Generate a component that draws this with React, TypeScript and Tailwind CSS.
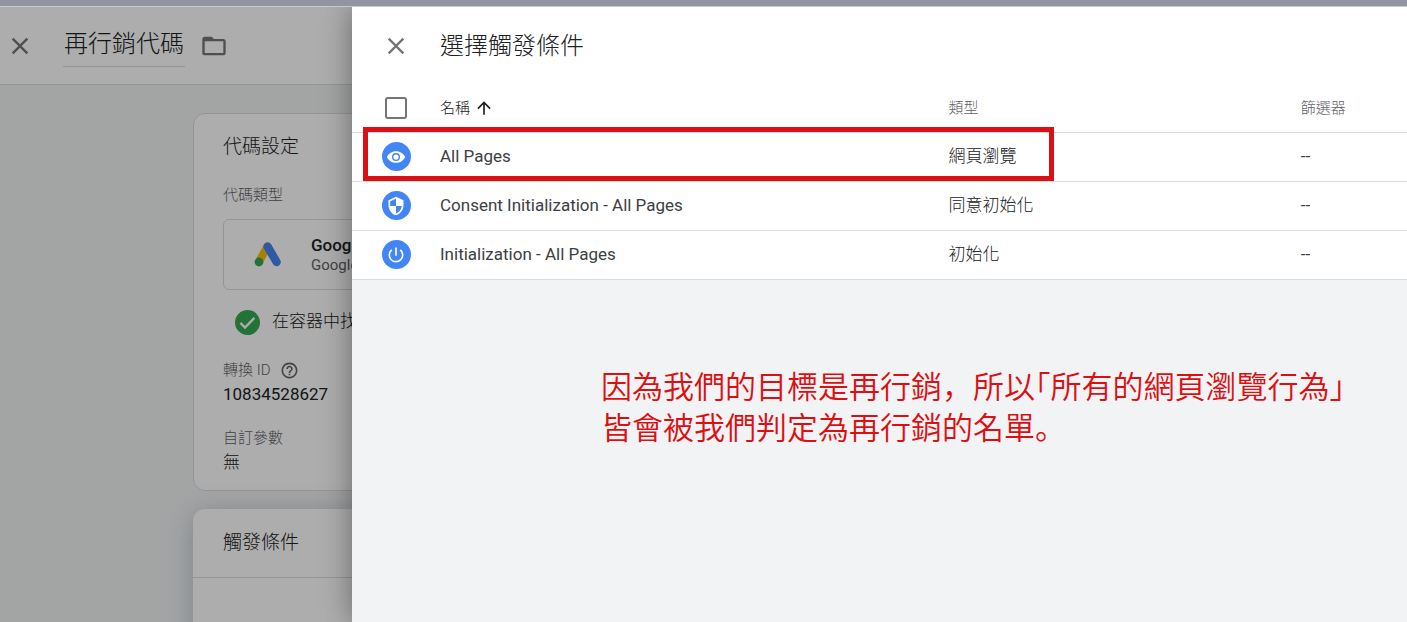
import type { ReactNode } from "react";
import {
  MdArrowUpward,
  MdClose,
  MdFolderOpen,
  MdHelpOutline,
  MdPowerSettingsNew,
  MdSecurity,
} from "react-icons/md";

type Trigger = {
  name: string;
  type: string;
  filter: string;
  icon: ReactNode;
  highlighted?: boolean;
};

function EyeIcon() {
  return (
    <svg width="20" height="20" viewBox="0 0 24 24" aria-hidden="true">
      <path
        d="M12 5C7 5 2.7 7.9 1 12c1.7 4.1 6 7 11 7s9.300-2.900 11-7c-1.700-4.100-6-7-11-7z"
        fill="currentColor"
      />
      <circle cx="12" cy="12" r="4" fill="none" stroke="#4285f4" strokeWidth="1.7" />
    </svg>
  );
}

const triggers: Trigger[] = [
  {
    name: "All Pages",
    type: "網頁瀏覽",
    filter: "--",
    icon: <EyeIcon />,
    highlighted: true,
  },
  {
    name: "Consent Initialization - All Pages",
    type: "同意初始化",
    filter: "--",
    icon: <MdSecurity size={20} />,
  },
  {
    name: "Initialization - All Pages",
    type: "初始化",
    filter: "--",
    icon: <MdPowerSettingsNew size={20} />,
  },
];

function GoogleAdsLogo() {
  return (
    <svg width="28" height="28" viewBox="0 0 28 28" aria-hidden="true">
      <path
        d="M13.6 5.4 5 20.6"
        stroke="#fbbc04"
        strokeWidth="8"
        strokeLinecap="round"
      />
      <path
        d="M13.6 5.6 22.6 21"
        stroke="#4285f4"
        strokeWidth="8.4"
        strokeLinecap="round"
      />
      <circle cx="5" cy="21" r="4.4" fill="#34a853" />
    </svg>
  );
}

function TagPage() {
  return (
    <div className="h-full bg-[#f1f3f4]">
      <header className="flex h-[78px] items-center border-b border-[#dadce0] bg-white pl-1.5">
        <button type="button" aria-label="關閉" className="text-[#757575]">
          <MdClose size={28} />
        </button>
        <h1 className="ml-[29px] border-b border-[#dadce0] px-px pt-0.5 pb-1 text-2xl leading-9 font-light">
          再行銷代碼
        </h1>
        <button type="button" aria-label="資料夾" className="ml-[15px] text-[#757575]">
          <MdFolderOpen size={28} />
        </button>
      </header>

      <main className="ml-[193px] pt-7">
        <section className="rounded-xl border border-[#dadce0] bg-white px-[29px] pt-4 pb-4">
          <h2 className="pt-px text-[19px] leading-8 font-light">代碼設定</h2>
          <p className="mt-5 text-[15px] leading-6 font-light text-[#5f6368]">代碼類型</p>
          <div className="mt-3 flex h-[71px] items-center rounded-md border border-[#dadce0] pl-[30px]">
            <GoogleAdsLogo />
            <div className="ml-[29px] leading-5 whitespace-nowrap">
              <p className="text-[17px] leading-5 font-medium">Google Ads 再行銷</p>
              <p className="text-[15px] leading-5 text-[#5f6368]">Google Ads</p>
            </div>
          </div>
          <div className="mt-5 flex h-6 items-center gap-3 pl-3 text-[17px] font-light whitespace-nowrap">
            <svg width="25" height="25" viewBox="0 0 24 24" aria-hidden="true">
              <circle cx="12" cy="12" r="12" fill="#34a853" />
              <path
                d="M5.2 12.4 9.6 16.8 18.6 7.6"
                fill="none"
                stroke="#fff"
                strokeWidth="2.2"
              />
            </svg>
            在容器中找到 Google 代碼
          </div>
          <p className="mt-6 flex items-center gap-2.5 text-[15px] leading-6 font-light text-[#5f6368]">
            轉換 ID
            <MdHelpOutline size={19} />
          </p>
          <p className="text-[17px] leading-6">10834528627</p>
          <p className="mt-5 text-[15px] leading-6 font-light text-[#5f6368]">自訂參數</p>
          <p className="text-[17px] leading-6 font-light">無</p>
        </section>

        <section className="mt-[18px] h-60 rounded-xl bg-white shadow-[0_4px_28px_rgba(60,80,110,0.3)]">
          <h2 className="flex h-[69px] items-center border-b border-[#dadce0] px-[30px] text-[19px] font-light">
            觸發條件
          </h2>
        </section>
      </main>
    </div>
  );
}

function TriggerTable() {
  return (
    <table className="w-full table-fixed bg-white text-left">
      <colgroup>
        <col className="w-[88px]" />
        <col className="w-[48.2%]" />
        <col className="w-[33.4%]" />
        <col />
      </colgroup>
      <thead>
        <tr className="h-12 border-b border-[#dadce0] text-[15px] text-[#5f6368]">
          <th className="align-middle">
            <input
              type="checkbox"
              aria-label="全選"
              className="mx-auto block size-[22px] appearance-none rounded-[3px] border-2 border-[#757575] bg-white"
            />
          </th>
          <th className="font-light text-[#202124]">
            <button type="button" className="flex items-center gap-1">
              名稱
              <MdArrowUpward size={20} />
            </button>
          </th>
          <th className="font-light">類型</th>
          <th className="font-light">篩選器</th>
        </tr>
      </thead>
      <tbody className="text-[17px]">
        {triggers.map((trigger) => (
          <tr key={trigger.name} className="relative h-[49px] border-b border-[#dadce0]">
            <td>
              <span className="mx-auto flex size-[29px] items-center justify-center rounded-full bg-[#4285f4] text-white">
                {trigger.icon}
              </span>
              {trigger.highlighted && (
                <span className="absolute -top-[5px] left-[11px] h-[54px] w-[65.5%] border-5 border-[#dc0f12]" />
              )}
            </td>
            <td className="text-[#3c4043]">{trigger.name}</td>
            <td className="font-light">{trigger.type}</td>
            <td className="text-[#3c4043]">{trigger.filter}</td>
          </tr>
        ))}
      </tbody>
    </table>
  );
}

function TriggerPanel() {
  return (
    <aside className="absolute inset-y-0 right-0 left-[352px] bg-[#f1f3f4] shadow-[0_0_28px_rgba(0,0,0,0.4)]">
      <header className="flex h-[77px] items-center bg-white pl-[30px]">
        <button type="button" aria-label="關閉" className="text-[#757575]">
          <MdClose size={28} />
        </button>
        <h1 className="ml-[30px] text-2xl font-light">選擇觸發條件</h1>
      </header>
      <TriggerTable />
      <p className="mt-[84px] ml-[249px] font-['Noto_Sans_CJK_TC',sans-serif] text-[31px] leading-[41px] font-[350] whitespace-nowrap text-[#dc0f12]">
        因為我們的目標是再行銷
        <span lang="ja" className="font-['Noto_Sans_CJK_JP',sans-serif]">，</span>
        所以｢所有的網頁瀏覽行為｣
        <br />
        皆會被我們判定為再行銷的名單
        <span lang="ja" className="font-['Noto_Sans_CJK_JP',sans-serif]">。</span>
      </p>
    </aside>
  );
}

export default function App() {
  return (
    <div
      lang="zh-Hant"
      className="flex h-screen flex-col font-['Roboto','Noto_Sans_CJK_TC',sans-serif] text-[#202124]"
    >
      <div className="h-1.5 shrink-0 bg-[#9194a2]" />
      <div className="relative flex-1 overflow-hidden border-t border-[#c8c9cf]">
        <TagPage />
        <div className="absolute inset-0 bg-black/32" />
        <TriggerPanel />
      </div>
    </div>
  );
}
